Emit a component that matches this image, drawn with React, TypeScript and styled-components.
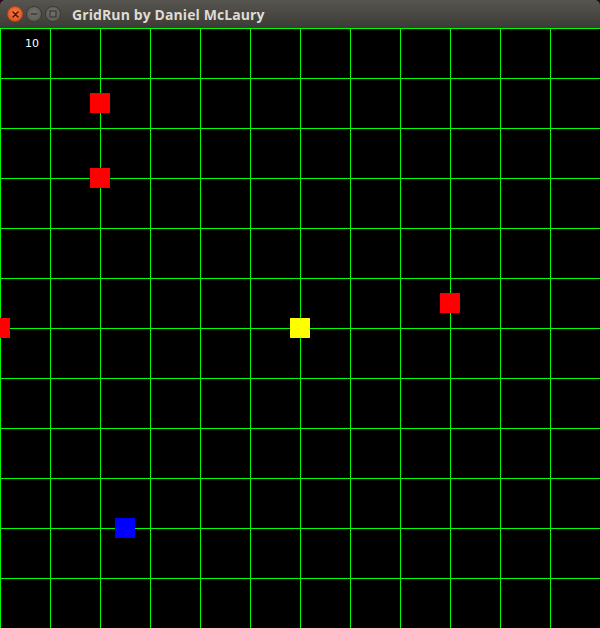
import React from "react";
import styled, { createGlobalStyle } from "styled-components";

const Global = createGlobalStyle`
  html, body { margin: 0; padding: 0; background: #2c001e; }
  body { width: 600px; height: 628px; overflow: hidden; }
`;

const Window = styled.div`
  width: 600px;
  height: 628px;
  display: flex;
  flex-direction: column;
  background: #000;
  border-radius: 5px 5px 0 0;
  overflow: hidden;
`;

const TitleBar = styled.div`
  height: 28px;
  flex: 0 0 28px;
  display: flex;
  align-items: center;
  padding-left: 7px;
  box-sizing: border-box;
  background: linear-gradient(#57554f, #3c3b37);
`;

const Buttons = styled.div`
  display: flex;
  align-items: center;
  gap: 3px;
`;

const CircleBtn = styled.div<{ $close?: boolean }>`
  width: 16px;
  height: 16px;
  border-radius: 50%;
  box-sizing: border-box;
  display: flex;
  align-items: center;
  justify-content: center;
  background: ${(p) =>
    p.$close
      ? "radial-gradient(circle at 50% 40%, #f47a48, #df4a16)"
      : "radial-gradient(circle at 50% 40%, #72716c, #58574f)"};
  border: 1px solid ${(p) => (p.$close ? "#b8421c" : "#3b3a36")};
`;

const Title = styled.div`
  margin-left: 11px;
  font-family: "Open Sans", "DejaVu Sans", sans-serif;
  font-weight: 700;
  font-size: 14px;
  color: #dfdbd2;
  letter-spacing: 0.1px;
  line-height: 1;
  padding-top: 1px;
`;

const Board = styled.div`
  position: relative;
  width: 600px;
  height: 600px;
  background: #000;
`;

const Score = styled.div`
  position: absolute;
  left: 25px;
  top: 10px;
  font-family: "DejaVu Sans", sans-serif;
  font-size: 11px;
  color: #fff;
  line-height: 1;
`;

type Sq = { x: number; y: number; w?: number; c: string };
const squares: Sq[] = [
  { x: 90, y: 65, c: "#ff0000" },
  { x: 90, y: 140, c: "#ff0000" },
  { x: 440, y: 265, c: "#ff0000" },
  { x: 0, y: 290, w: 10, c: "#ff0000" },
  { x: 290, y: 290, c: "#ffff00" },
  { x: 115, y: 490, c: "#0000ff" },
];

const Grid: React.FC = () => {
  const lines = [];
  for (let i = 0; i < 12; i++) {
    lines.push(
      <line key={"v" + i} x1={i * 50 + 0.5} y1={0} x2={i * 50 + 0.5} y2={600} />
    );
    lines.push(
      <line key={"h" + i} x1={0} y1={i * 50 + 0.5} x2={600} y2={i * 50 + 0.5} />
    );
  }
  return (
    <svg width={600} height={600} style={{ display: "block" }} shapeRendering="crispEdges">
      <g stroke="#00ff00" strokeWidth={1}>{lines}</g>
      {squares.map((s, i) => (
        <rect key={i} x={s.x} y={s.y} width={s.w ?? 20} height={20} fill={s.c} />
      ))}
    </svg>
  );
};

export default function App() {
  return (
    <>
      <Global />
      <Window>
        <TitleBar>
          <Buttons>
            <CircleBtn $close>
              <svg width="7" height="7" viewBox="0 0 7 7">
                <path d="M1 1L6 6M6 1L1 6" stroke="#4a1a08" strokeWidth="1.5" strokeLinecap="round" />
              </svg>
            </CircleBtn>
            <CircleBtn>
              <svg width="8" height="8" viewBox="0 0 8 8">
                <path d="M1 4H7" stroke="#3a3935" strokeWidth="1.5" />
              </svg>
            </CircleBtn>
            <CircleBtn>
              <svg width="8" height="8" viewBox="0 0 8 8">
                <rect x="1" y="1" width="6" height="6" fill="none" stroke="#3a3935" strokeWidth="1.2" />
              </svg>
            </CircleBtn>
          </Buttons>
          <Title>GridRun by Daniel McLaury</Title>
        </TitleBar>
        <Board>
          <Grid />
          <Score>10</Score>
        </Board>
      </Window>
    </>
  );
}
